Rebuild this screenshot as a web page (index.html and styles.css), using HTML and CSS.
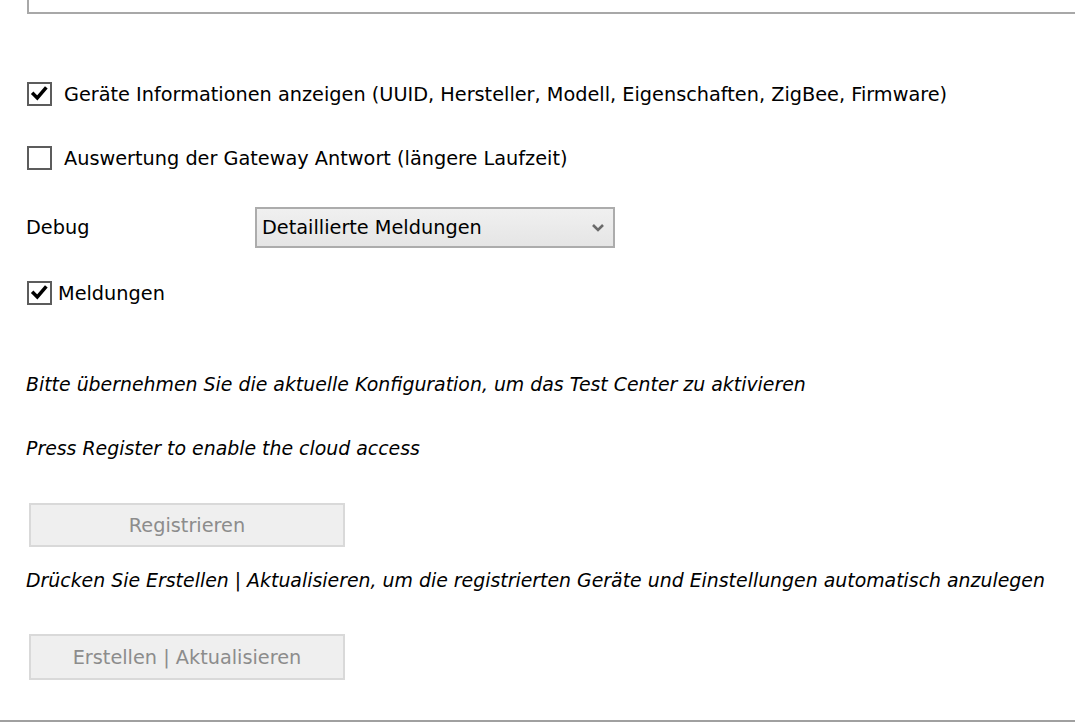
FILE: index.html
```html
<!DOCTYPE html>
<html lang="de">
<head>
<meta charset="utf-8">
<title>Einstellungen</title>
<link rel="stylesheet" href="styles.css">
</head>
<body>
<div class="page">
  <div class="topbox"></div>

  <label class="check-row row-info">
    <span class="box checked"><svg viewBox="0 0 24 24" width="22" height="22"><path d="M5 12 L9.5 16.5 L18.5 6" fill="none" stroke="#000" stroke-width="4" stroke-linecap="square"/></svg></span>
    <span class="check-label">Geräte Informationen anzeigen (UUID, Hersteller, Modell, Eigenschaften, ZigBee, Firmware)</span>
  </label>

  <label class="check-row row-gateway">
    <span class="box"></span>
    <span class="check-label">Auswertung der Gateway Antwort (längere Laufzeit)</span>
  </label>

  <div class="debug-row">
    <span class="debug-label">Debug</span>
    <div class="select">
      <span class="select-text">Detaillierte Meldungen</span>
      <svg class="chev" viewBox="0 0 14 10" width="14" height="10"><path d="M2 2 L7 7 L12 2" fill="none" stroke="#6a6a6a" stroke-width="2.6"/></svg>
    </div>
  </div>

  <label class="check-row row-msg">
    <span class="box checked"><svg viewBox="0 0 24 24" width="22" height="22"><path d="M5 12 L9.5 16.5 L18.5 6" fill="none" stroke="#000" stroke-width="4" stroke-linecap="square"/></svg></span>
    <span class="check-label tight">Meldungen</span>
  </label>

  <p class="note note-1">Bitte übernehmen Sie die aktuelle Konfiguration, um das Test Center zu aktivieren</p>
  <p class="note note-2">Press Register to enable the cloud access</p>

  <button class="btn btn-reg" disabled>Registrieren</button>

  <p class="note note-3">Drücken Sie Erstellen | Aktualisieren, um die registrierten Geräte und Einstellungen automatisch anzulegen</p>

  <button class="btn btn-create" disabled>Erstellen | Aktualisieren</button>

  <div class="bottom-line"></div>
</div>
</body>
</html>
```
FILE: styles.css
```css
html, body {
  margin: 0;
  padding: 0;
  background: #ffffff;
  overflow: hidden;
}

.page {
  width: 1075px;
  height: 722px;
  display: flex;
  flex-direction: column;
  font-family: "DejaVu Sans", sans-serif;
  font-size: 19.3px;
  color: #000;
  overflow: hidden;
}

.topbox {
  margin-left: 27px;
  margin-right: -20px;
  height: 12px;
  border-left: 2px solid #a8a8a8;
  border-bottom: 2px solid #a8a8a8;
  flex: none;
}

.check-row {
  display: flex;
  align-items: center;
  margin-left: 27px;
  height: 24px;
  flex: none;
}

.row-info { margin-top: 68px; }
.row-gateway { margin-top: 40px; }
.row-msg { margin-top: 33px; }

.box {
  box-sizing: border-box;
  width: 25px;
  height: 24px;
  border: 2px solid #5c5c5c;
  background: #fff;
  display: flex;
  align-items: center;
  justify-content: center;
  flex: none;
}

.check-label {
  margin-left: 12px;
  white-space: nowrap;
}

.check-label.tight {
  margin-left: 6px;
}

.debug-row {
  display: flex;
  align-items: center;
  margin-top: 37px;
  height: 41px;
  flex: none;
}

.debug-label {
  margin-left: 26px;
  width: 229px;
}

.select {
  box-sizing: border-box;
  width: 360px;
  height: 41px;
  border: 2px solid #acacac;
  background: linear-gradient(#f0f0f0, #e5e5e5);
  display: flex;
  align-items: center;
  justify-content: space-between;
  padding: 0 8px 0 5px;
}

.chev {
  margin-top: 1px;
}

.note {
  margin: 0;
  margin-left: 26px;
  font-style: italic;
  font-size: 18.9px;
  height: 24px;
  line-height: 24px;
  white-space: nowrap;
  flex: none;
}

.note-1 { margin-top: 67px; }
.note-2 { margin-top: 40px; }
.note-3 { margin-top: 21px; }

.btn {
  box-sizing: border-box;
  margin-left: 29px;
  width: 316px;
  font-family: inherit;
  font-size: inherit;
  color: #8c8c8c;
  background: #efefef;
  border: 2px solid #d9d9d9;
  padding: 0;
  flex: none;
}

.btn-reg {
  margin-top: 43px;
  height: 44px;
}

.btn-create {
  margin-top: 42px;
  height: 46px;
}

.bottom-line {
  margin-top: auto;
  height: 2px;
  background: #a0a0a0;
  flex: none;
}
```
